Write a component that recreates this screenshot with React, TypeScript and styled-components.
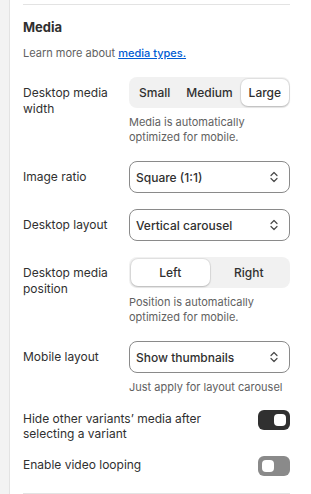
import React from 'react';
import styled, { createGlobalStyle } from 'styled-components';

const GlobalStyle = createGlobalStyle`
    html, body {
        margin: 0;
        padding: 0;
        background: #ffffff;
    }
    body {
        font-family: Inter, 'Noto Sans', 'Liberation Sans', sans-serif;
        color: #303030;
        -webkit-font-smoothing: antialiased;
    }
`;

const Page = styled.div`
    display: flex;
    width: 311px;
    height: 494px;
    overflow: hidden;
`;

const SideStrip = styled.div`
    width: 9px;
    flex: none;
    background: #f3f3f3;
    border-right: 1px solid #e3e3e3;
`;

const Panel = styled.div`
    flex: 1;
    padding: 4px 21px 0 13px;
    display: flex;
    flex-direction: column;
`;

const Divider = styled.div`
    height: 1px;
    background: #e3e3e3;
`;

const Section = styled.div`
    display: flex;
    flex-direction: column;
    gap: 16px;
    padding: 12px 0 17px;
`;

const Heading = styled.h2`
    margin: 0;
    font-size: 13px;
    line-height: 20px;
    font-weight: 650;
    color: #303030;
`;

const Intro = styled.p`
    margin: -8px 0 0;
    font-size: 11px;
    line-height: 16px;
    color: #616161;

    a {
        color: #005bd3;
        text-decoration: underline;
        font-weight: 500;
    }
`;

const Field = styled.div`
    display: grid;
    grid-template-columns: 1fr 161px;
    column-gap: 8px;
    align-items: start;
`;

const Label = styled.div`
    padding-top: 8px;
    font-size: 12px;
    line-height: 16px;
    color: #303030;
`;

const Control = styled.div`
    display: flex;
    flex-direction: column;
    gap: 7px;
`;

const Help = styled.div`
    font-size: 11px;
    line-height: 15px;
    color: #616161;
`;

const Segmented = styled.div<{ $even?: boolean }>`
    display: flex;
    padding: 2px;
    border-radius: 8px;
    background: #f1f1f1;
    height: 31px;
    box-sizing: border-box;

    & > button {
        flex: ${(p) => (p.$even ? '1 1 0' : '1 1 auto')};
    }
`;

const Segment = styled.button<{ $active?: boolean }>`
    border: none;
    padding: 0 8px;
    border-radius: 7px;
    font-family: inherit;
    font-size: 12px;
    font-weight: 450;
    color: #303030;
    background: ${(p) => (p.$active ? '#ffffff' : 'transparent')};
    box-shadow: ${(p) =>
        p.$active ? '0 0 0 1px rgba(0,0,0,0.06), 0 1px 2px rgba(0,0,0,0.18)' : 'none'};
    cursor: pointer;
`;

const SelectBox = styled.div`
    display: flex;
    align-items: center;
    justify-content: space-between;
    height: 32px;
    box-sizing: border-box;
    padding: 0 10px 0 6px;
    border: 1px solid #8a8a8a;
    border-radius: 8px;
    font-size: 12px;
    font-weight: 450;
    color: #303030;
`;

const ToggleRow = styled.div`
    display: flex;
    align-items: flex-start;
    justify-content: space-between;
    gap: 12px;
`;

const ToggleLabel = styled.div`
    font-size: 12px;
    line-height: 15px;
    color: #303030;
    max-width: 200px;
`;

const Toggle = styled.div<{ $on?: boolean }>`
    flex: none;
    width: 32px;
    height: 20px;
    margin-top: -1px;
    border-radius: 6px;
    box-sizing: border-box;
    padding: 4px;
    display: flex;
    justify-content: ${(p) => (p.$on ? 'flex-end' : 'flex-start')};
    background: ${(p) => (p.$on ? '#303030' : '#8a8a8a')};

    &::after {
        content: '';
        width: 12px;
        height: 12px;
        border-radius: 4px;
        background: #ffffff;
    }
`;

const Chevron = () => (
    <svg width="10" height="14" viewBox="0 0 10 14" fill="none">
        <path d="M2 5.5 5 2.5 8 5.5M2 8.5 5 11.5 8 8.5" stroke="#4a4a4a" strokeWidth="1.2" strokeLinecap="round" strokeLinejoin="round" />
    </svg>
);

const Select = ({ value }: { value: string }) => (
    <SelectBox>
        <span>{value}</span>
        <Chevron />
    </SelectBox>
);

export default function App() {
    return (
        <Page>
            <GlobalStyle />
            <SideStrip />
            <Panel>
                <Divider />
                <Section>
                    <Heading>Media</Heading>
                    <Intro>
                        Learn more about <a href="#">media types.</a>
                    </Intro>

                    <Field>
                        <Label>Desktop media width</Label>
                        <Control>
                            <Segmented>
                                <Segment>Small</Segment>
                                <Segment>Medium</Segment>
                                <Segment $active>Large</Segment>
                            </Segmented>
                            <Help>Media is automatically optimized for mobile.</Help>
                        </Control>
                    </Field>

                    <Field>
                        <Label>Image ratio</Label>
                        <Control>
                            <Select value="Square (1:1)" />
                        </Control>
                    </Field>

                    <Field>
                        <Label>Desktop layout</Label>
                        <Control>
                            <Select value="Vertical carousel" />
                        </Control>
                    </Field>

                    <Field>
                        <Label>Desktop media position</Label>
                        <Control>
                            <Segmented $even>
                                <Segment $active>Left</Segment>
                                <Segment>Right</Segment>
                            </Segmented>
                            <Help>Position is automatically optimized for mobile.</Help>
                        </Control>
                    </Field>

                    <Field>
                        <Label>Mobile layout</Label>
                        <Control>
                            <Select value="Show thumbnails" />
                            <Help>Just apply for layout carousel</Help>
                        </Control>
                    </Field>

                    <ToggleRow>
                        <ToggleLabel>Hide other variants’ media after selecting a variant</ToggleLabel>
                        <Toggle $on />
                    </ToggleRow>

                    <ToggleRow>
                        <ToggleLabel>Enable video looping</ToggleLabel>
                        <Toggle />
                    </ToggleRow>
                </Section>
                <Divider />
            </Panel>
        </Page>
    );
}
